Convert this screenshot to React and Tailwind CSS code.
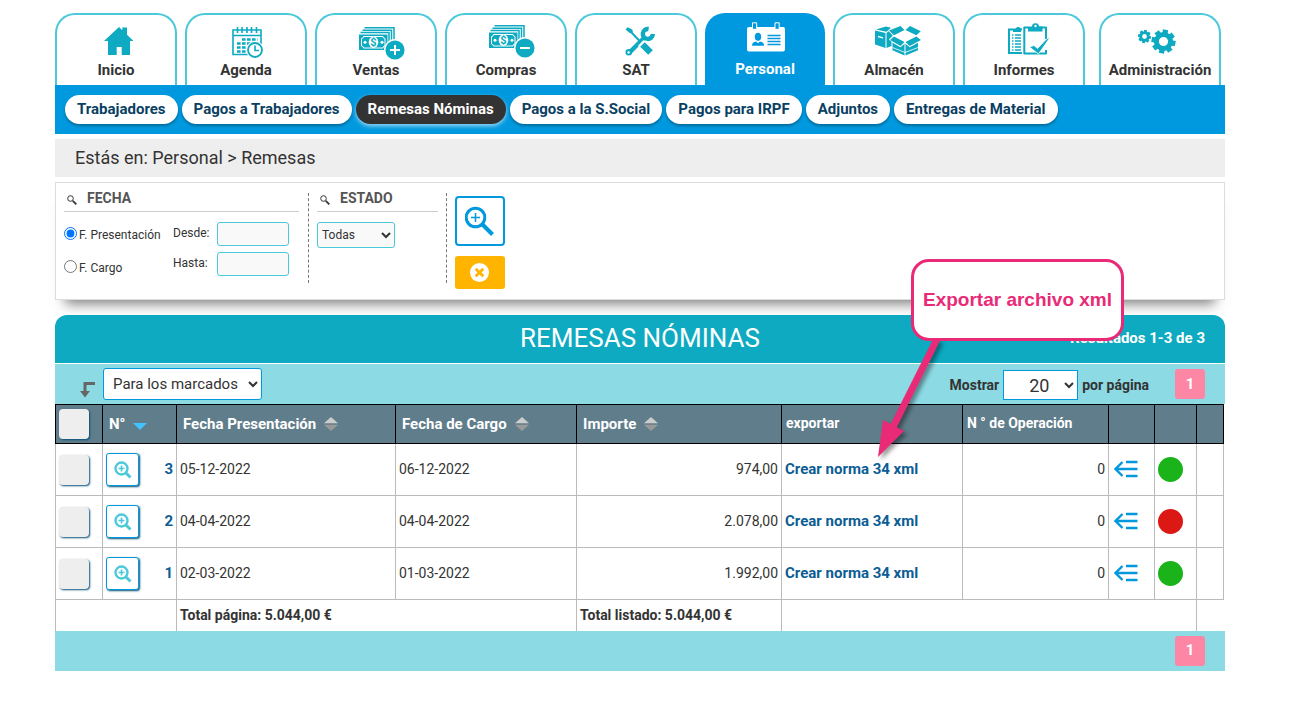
const TEAL = "#0daac1";

const HomeIcon = () => (
  <path
    fill={TEAL}
    d="M33 4l3.3 3.3V4.5H41v7.3l6.5 6.2H44v14h-8.3v-8h-5v8H22V18h-4z"
  />
);

const AgendaIcon = () => (
  <g fill="none" stroke={TEAL}>
    <path strokeWidth="1.6" d="M17 7h28v24.5H17zM17 12.5h28" />
    <path strokeWidth="1.6" d="M21.5 4v6M26 4v6M31 4v6M35.5 4v6M40.5 4v6" />
    <path
      strokeWidth="2.6"
      strokeDasharray="3.6 1.4"
      d="M26 16.5h15.5M21 20.5h20M21 24.5h15M21 28.5h10"
    />
    <circle cx="39" cy="27" r="9" fill="#fff" stroke="none" />
    <circle cx="39" cy="27" r="7" fill="#fff" strokeWidth="1.8" />
    <path strokeWidth="1.6" d="M39 22.5V27.5h4" />
  </g>
);

const MoneyIcon = ({ minus }) => (
  <g transform={minus ? "translate(0 -2)" : undefined}>
    <path
      fill="none"
      stroke={TEAL}
      strokeWidth="1.5"
      d="M18.5 4.8H48V20M16.5 7.2h29V20M14.500 9.6H43V20"
    />
    <path fill={TEAL} d="M13 11.5h28.5V27H13z" />
    <path
      fill="none"
      stroke="#fff"
      d="M17.5 13.5h19.5a2 2 0 0 0 2 2v7.5a2 2 0 0 0-2 2H17.5a2 2 0 0 0-2-2v-7.5a2 2 0 0 0 2-2z"
    />
    <ellipse cx="27.5" cy="19.2" rx="4.8" ry="5.8" fill="#fff" />
    <circle cx="19" cy="19.2" r="1.5" fill="#fff" />
    <circle cx="36" cy="19.2" r="1.5" fill="#fff" />
    <text
      x="27.5"
      y="23.3"
      textAnchor="middle"
      fill={TEAL}
      className="text-[11px] font-bold"
    >
      $
    </text>
    <circle cx="49" cy="27" r="11" fill="#fff" />
    <circle cx="49" cy="27" r="9.6" fill={TEAL} />
    <path
      stroke="#fff"
      strokeWidth="2"
      d={minus ? "M44 27h10" : "M44 27h10M49 22v10"}
    />
  </g>
);

const ToolsIcon = () => (
  <g fill="none" stroke={TEAL}>
    <path fill={TEAL} stroke="none" d="M19.5 6.500l2.300-2.300 4.700 2.600.3 3-3 .2z" />
    <path strokeWidth="2" d="M24 8l13 13.5" />
    <path strokeWidth="4.5" d="M24 29l13.500-13.500" />
    <path stroke="#fff" strokeWidth="8" d="M34.800 19.800l9 9" />
    <path strokeWidth="6.5" d="M36.500 21.500l8 8" />
    <circle cx="22.8" cy="29.2" r="3.3" fill={TEAL} stroke="none" />
    <circle cx="22.6" cy="29.4" r="1.2" fill="#fff" stroke="none" />
    <path strokeWidth="4.4" d="M42.600 6a5 5 0 1 0 4.200 5" />
  </g>
);

const CardIcon = () => (
  <g>
    <rect x="12" y="5" width="38" height="24.5" rx="2" fill="#fff" />
    <path
      fill="#0099df"
      stroke="#fff"
      d="M17.5.8h4.200v6.500h-4.200zM40 .8h4.200v6.500H40z"
    />
    <ellipse cx="23" cy="14.8" rx="3.2" ry="4" fill="#0099df" />
    <path
      fill="#0099df"
      d="M17 23.800c0-3 1.500-3.800 4-4.300l2 1.800 2-1.800c2.500.5 4 1.300 4 4.300z"
    />
    <path
      stroke="#0099df"
      strokeWidth="1.3"
      d="M32.500 13.500H45.500M32.500 16.500H45.500M32.500 19.500H45.500M32.500 22.500H45.500"
    />
  </g>
);

const BoxesIcon = () => (
  <g fill={TEAL}>
    <path d="M12 6.500L22 3.500l5 1.200-4.500 4zM11 7.500l10.500 2.500v15L11 21.500z" />
    <path d="M22.500 10l2.300-1.800 4 4.500-4 3.800 2.700 2.300v4.200l-5 2z" />
    <path stroke="#fff" strokeWidth="1.3" d="M14 13.500l5 1.300" />
    <path d="M30 12.200l10.500-5.200-4-4L25 7.500zM41.500 7l10.800 5.200 4.500-4L46 3z" />
    <path d="M30 13.500l10.500 5.500-4 4L26 17zM52.300 13.500L41.500 19l4.200 4L57 17z" />
    <path d="M28.500 19.800l8 4.500 4-3.500v11.700l-12-5.200zM54 19.800l-8.300 4.500-4.200-3.500v11.700l12.500-5.200z" />
    <path stroke="#fff" strokeWidth=".8" d="M28.500 24.500l12.500 5 13-5" fill="none" />
  </g>
);

const ReportsIcon = () => (
  <g fill="none" stroke={TEAL}>
    <path strokeWidth="2" d="M28 6.500H15V30h13" />
    <path fill={TEAL} stroke="none" d="M19 9V6h2.500a3 3 0 0 1 5.500-.5V9z" />
    <path
      strokeWidth="1.3"
      d="M18 12h1.500M21 12h6M18 15h1.500M21 15h6M18 18h1.500M21 18h6M18 21h1.500M21 21h6M18 24h1.500M21 24h6M18 27h1.500M21 27h6"
    />
    <path
      strokeWidth="2"
      strokeLinejoin="round"
      d="M52 16V4.500H30.300V30.500h21.700V27"
    />
    <path
      fill={TEAL}
      stroke="none"
      d="M34 8.500V4H38a3.500 3.500 0 0 1 7-.5h3.500v5z"
    />
    <circle cx="41.5" cy="3" r="1.2" fill="#fff" stroke="none" />
    <path
      fill={TEAL}
      stroke="#fff"
      strokeWidth=".8"
      d="M35.500 24l4.500-1.500 3.500 3 9-9.500 3.500-1.500-11.500 16.500z"
    />
  </g>
);

const Gear = ({ cx, cy, r, hole }) => (
  <g transform={`translate(${cx} ${cy})`} fill={TEAL}>
    <circle
      r={(r * 0.8 + hole) / 2}
      fill="none"
      stroke={TEAL}
      strokeWidth={r * 0.8 - hole}
    />
    {[0, 45, 90, 135, 180, 225, 270, 315].map((a) => (
      <rect
        key={a}
        x={-r * 0.22}
        y={-r}
        width={r * 0.44}
        height={r * 0.4}
        transform={`rotate(${a + 10})`}
      />
    ))}
  </g>
);

const GearsIcon = () => (
  <g>
    <Gear cx={14.5} cy={13.5} r={6.5} hole={2.4} />
    <Gear cx={33.5} cy={18.5} r={12} hole={4.6} />
  </g>
);

const TABS = [
  { label: "Inicio", icon: <HomeIcon /> },
  { label: "Agenda", icon: <AgendaIcon /> },
  { label: "Ventas", icon: <MoneyIcon /> },
  { label: "Compras", icon: <MoneyIcon minus /> },
  { label: "SAT", icon: <ToolsIcon /> },
  { label: "Personal", icon: <CardIcon />, active: true },
  { label: "Almacén", icon: <BoxesIcon /> },
  { label: "Informes", icon: <ReportsIcon /> },
  { label: "Administración", icon: <GearsIcon /> },
];

const SUBTABS = [
  "Trabajadores",
  "Pagos a Trabajadores",
  "Remesas Nóminas",
  "Pagos a la S.Social",
  "Pagos para IRPF",
  "Adjuntos",
  "Entregas de Material",
];

const ROWS = [
  { id: 3, date: "05-12-2022", charge: "06-12-2022", amount: "974,00", ok: true },
  { id: 2, date: "04-04-2022", charge: "04-04-2022", amount: "2.078,00", ok: false },
  { id: 1, date: "02-03-2022", charge: "01-03-2022", amount: "1.992,00", ok: true },
];

const Nav = () => (
  <header>
    <nav className="flex gap-2">
      {TABS.map(({ label, icon, active }) => (
        <a
          key={label}
          href="#"
          className={
            active
              ? "flex h-[72px] w-[120px] flex-col items-center rounded-t-[20px] bg-[#0099df] pt-[9px] text-white"
              : "flex h-[72px] w-[122px] flex-col items-center rounded-t-[20px] border-2 border-b-0 border-[#4bc9da] pt-2 text-[#333] last:ml-1.5"
          }
        >
          <svg width="60" height="36" viewBox="0 0 60 36" className="overflow-visible" aria-hidden="true">
            {icon}
          </svg>
          <span className="text-[15px] leading-[22px] font-bold">{label}</span>
        </a>
      ))}
    </nav>
    <nav className="flex gap-1 bg-[#0099df] p-2.5">
      {SUBTABS.map((label) => (
        <a
          key={label}
          href="#"
          className={
            label === "Remesas Nóminas"
              ? "rounded-full bg-[#333] px-3 text-[15px] leading-[29px] font-bold text-white shadow-[0_2px_4px_rgba(255,255,255,0.6)]"
              : "rounded-full bg-white px-3 text-[15px] leading-[29px] font-bold text-[#0a3f63] shadow-[0_2px_3px_rgba(0,0,0,0.3)]"
          }
        >
          {label}
        </a>
      ))}
    </nav>
  </header>
);

const FilterTitle = ({ children }) => (
  <h2 className="flex h-[19px] gap-2.5 border-b border-[#ccc] pl-[3px] text-[14px] leading-[10px] font-bold text-[#555]">
    <svg width="10" height="10" viewBox="0 0 10 10" className="mt-[2px]" aria-hidden="true">
      <circle cx="3.5" cy="3.5" r="2.8" fill="none" stroke="#333" />
      <path stroke="#333" strokeWidth="1.8" d="M5.800 5.800l3.500 3.500" />
    </svg>
    {children}
  </h2>
);

const Filters = () => (
  <form className="mt-[5px] flex min-h-[118px] border border-[#ddd] bg-white pt-2.5 pl-2 text-[12px] text-[#333] shadow-[0_14px_12px_-10px_rgba(0,0,0,0.5)]">
    <div className="h-[90px] w-[245px] border-r border-dashed border-[#777] pr-[9px]">
      <FilterTitle>FECHA</FilterTitle>
      <div className="mt-2.5 flex">
        <div className="flex w-[109px] flex-col gap-[13px] pt-[3px]">
          <label className="flex h-5 items-center gap-[2px]">
            <input type="radio" name="fecha" defaultChecked className="m-0 mb-1 size-[13px]" />
            F. Presentación
          </label>
          <label className="flex h-5 items-center gap-[2px]">
            <input type="radio" name="fecha" className="m-0 mb-1 size-[13px]" />
            F. Cargo
          </label>
        </div>
        <div className="flex flex-col gap-1.5">
          <label className="flex">
            <span className="w-11 leading-[22px]">Desde:</span>
            <input type="text" className="h-6 w-[72px] rounded-[3px] border border-[#4bc9da] bg-[#f9f9f9] px-1" />
          </label>
          <label className="flex">
            <span className="w-11 leading-[22px]">Hasta:</span>
            <input type="text" className="h-6 w-[72px] rounded-[3px] border border-[#4bc9da] bg-[#f9f9f9] px-1" />
          </label>
        </div>
      </div>
    </div>
    <div className="h-[90px] w-[138px] border-r border-dashed border-[#777] px-2">
      <FilterTitle>ESTADO</FilterTitle>
      <select
        aria-label="Estado"
        className="mt-2.5 h-[26px] w-[78px] rounded-[3px] border border-[#4bc9da] bg-[#f9f9f9]"
      >
        <option>Todas</option>
      </select>
    </div>
    <div className="flex flex-col gap-2.5 pt-[3px] pl-2">
      <button
        type="button"
        aria-label="Buscar"
        className="flex size-[50px] items-center justify-center rounded-[4px] border-2 border-[#0099df]"
      >
        <svg width="30" height="30" viewBox="0 0 30 30" fill="none" stroke="#0099df">
          <circle cx="10.5" cy="11.5" r="9.3" strokeWidth="3" />
          <path strokeWidth="1.5" d="M6 11.500h9M10.500 7v9" />
          <path strokeWidth="4" d="M17 18l10.500 10.500" />
        </svg>
      </button>
      <button
        type="button"
        aria-label="Limpiar"
        className="flex h-[33px] w-[50px] items-center justify-center rounded-[3px] bg-[#ffb400]"
      >
        <svg width="20" height="20" viewBox="0 0 20 20">
          <circle cx="9.5" cy="9.5" r="9.5" fill="#fff" />
          <path stroke="#ffb400" strokeWidth="2.8" d="M5.700 5.700l7.600 7.600M13.300 5.700l-7.600 7.600" />
        </svg>
      </button>
    </div>
  </form>
);

const SortIcon = () => (
  <svg width="14" height="14" viewBox="0 0 14 14" aria-hidden="true">
    <path fill="#ccc" d="M7 0l7 6.300H0z" />
    <path fill="#999" d="M7 14L0 7.700h14z" />
  </svg>
);

const Check = ({ label }) => (
  <input
    type="checkbox"
    aria-label={label}
    className="block size-[30px] appearance-none rounded-[4px] bg-[#eee] shadow-[1px_1px_2px_#045078]"
  />
);

const PageButton = () => (
  <button
    type="button"
    className="size-[30px] rounded-[3px] bg-[#fc86a3] text-[15px] font-bold text-white"
  >
    1
  </button>
);

const Results = () => (
  <table className="w-full table-fixed border-collapse text-left text-[14px] leading-[20px] text-[#333]">
    <colgroup>
      <col className="w-[47px]" />
      <col className="w-[74px]" />
      <col />
      <col className="w-[181px]" />
      <col className="w-[205px]" />
      <col className="w-[181px]" />
      <col className="w-[146px]" />
      <col className="w-[46px]" />
      <col className="w-[42px]" />
      <col className="w-[27px]" />
    </colgroup>
    <thead>
      <tr className="h-[39px] bg-[#607d8b] text-white [&>th]:border [&>th]:border-black">
        <th className="pl-[3px]">
          <Check label="Marcar todos" />
        </th>
        <th className="pl-1.5">
          <span className="flex items-center gap-2 text-[15px]">
            N°
            <svg width="14" height="7" viewBox="0 0 14 7" className="mt-1" aria-hidden="true">
              <path fill="#40c4ff" d="M0 0h14L7 7z" />
            </svg>
          </span>
        </th>
        <th className="pl-1.5">
          <span className="flex items-center gap-2 text-[15px]">
            Fecha Presentación <SortIcon />
          </span>
        </th>
        <th className="pl-1.5">
          <span className="flex items-center gap-2 text-[15px]">
            Fecha de Cargo <SortIcon />
          </span>
        </th>
        <th className="pl-1.5">
          <span className="flex items-center gap-2 text-[15px]">
            Importe <SortIcon />
          </span>
        </th>
        <th className="pb-[3px] pl-1">exportar</th>
        <th className="pb-[3px] pl-1">N ° de Operación</th>
        <th></th>
        <th></th>
        <th></th>
      </tr>
    </thead>
    <tbody>
      {ROWS.map((row) => (
        <tr key={row.id} className="h-[52px] [&>td]:border [&>td]:border-[#bbb] [&>td]:px-[3px]">
          <td>
            <Check label={`Marcar ${row.id}`} />
          </td>
          <td>
            <div className="flex items-center justify-between">
              <button
                type="button"
                aria-label={`Ver ${row.id}`}
                className="flex size-[33px] items-center justify-center rounded-[3px] border border-[#0099df] bg-white shadow-[1px_1px_2px_#045078]"
              >
                <svg width="18" height="18" viewBox="0 0 18 18" fill="none" stroke="#4bc9da">
                  <circle cx="7.5" cy="7.5" r="6" strokeWidth="2.4" />
                  <path strokeWidth="1.6" d="M4.500 7.500h6M7.500 4.500v6" />
                  <path strokeWidth="3" d="M11.500 11.500l5 5" />
                </svg>
              </button>
              <a href="#" className="pb-[2px] text-[15px] font-bold text-[#0b5d94]">
                {row.id}
              </a>
            </div>
          </td>
          <td className="pb-[2px]">{row.date}</td>
          <td className="pb-[2px]">{row.charge}</td>
          <td className="pb-[2px] text-right">{row.amount}</td>
          <td className="pb-[2px]">
            <a href="#" className="text-[15px] font-bold text-[#0b5d94]">
              Crear norma 34 xml
            </a>
          </td>
          <td className="pb-[2px] text-right">0</td>
          <td className="pb-[2px]">
            <button type="button" aria-label="Detalle" className="ml-[2px] block">
              <svg width="24" height="18" viewBox="0 0 24 18" fill="none" stroke="#0099df" strokeWidth="2.4">
                <path d="M8.500 2L1.500 9l7 7M1.500 9H23.500M12 2H23.500M12 16H23.500" />
              </svg>
            </button>
          </td>
          <td>
            <span
              className={
                row.ok
                  ? "block size-[25px] rounded-full bg-[#1ab31a]"
                  : "block size-[25px] rounded-full bg-[#dc1814]"
              }
            />
          </td>
          <td></td>
        </tr>
      ))}
      <tr className="h-[31px] font-bold [&>td]:border-x [&>td]:border-[#bbb] [&>td]:px-[3px]">
        <td colSpan={2}></td>
        <td colSpan={2}>Total página: 5.044,00 €</td>
        <td>Total listado: 5.044,00 €</td>
        <td colSpan={4}></td>
        <td className="border-r-0!"></td>
      </tr>
    </tbody>
  </table>
);

const Callout = () => (
  <div className="absolute -top-14 left-[822px]">
    <svg
      width="213"
      height="204"
      viewBox="0 0 213 204"
      className="block overflow-visible drop-shadow-[3px_3px_2px_rgba(0,0,0,0.4)]"
      aria-hidden="true"
    >
      <path stroke="#e92a76" strokeWidth="7" d="M60 80L15 170" />
      <path fill="#e92a76" d="M1 198l5-37 21 11z" />
    </svg>
    <div className="absolute top-0 left-[34px] flex h-[82px] w-[213px] items-center justify-center rounded-[18px] border-3 border-[#e92a76] bg-white font-['Liberation_Sans',Arial,sans-serif] text-[19px] font-bold whitespace-nowrap text-[#e92a76]">
      Exportar archivo xml
    </div>
  </div>
);

const App = () => {
  return (
    <main className="min-w-[1224px] bg-white pt-[13px] pr-[83px] pb-8 pl-[55px] font-[Roboto,sans-serif]">
      <Nav />
      <p className="mt-[5px] bg-[#eee] pl-5 text-[18px] leading-[38px] text-[#333]">
        Estás en: Personal &gt; Remesas
      </p>
      <Filters />

      <section className="relative mt-[15px]">
        <div className="grid h-12 grid-cols-[1fr_auto_1fr] items-center rounded-t-[12px] bg-[#0daac1] pb-[2px] text-white">
          <span />
          <h1 className="text-[26px] leading-[30px]">REMESAS NÓMINAS</h1>
          <span className="pr-5 text-right text-[15px] font-bold">Resultados 1-3 de 3</span>
        </div>
        <div className="mt-px flex h-10 items-center bg-[#8cdae4] pr-5 text-[#333]">
          <svg width="16" height="17" viewBox="0 0 16 17" className="mt-2.5 ml-6" aria-hidden="true">
            <path fill="none" stroke="#666" strokeWidth="3" d="M16 2.500H6V11" />
            <path fill="#666" d="M1 10h10l-5 6.500z" />
          </svg>
          <select
            aria-label="Acción para los marcados"
            className="ml-2 h-8 w-[159px] rounded-[3px] border border-[#0099df] bg-white pl-[5px] text-[15px]"
          >
            <option>Para los marcados</option>
          </select>
          <label className="ml-auto flex items-center gap-1 pt-[2px] text-[14px] font-bold">
            Mostrar
            <select className="h-[30px] w-[75px] border border-[#0099df] bg-white pl-[21px] text-[18px] font-normal">
              <option>20</option>
            </select>
            por página
          </label>
          <div className="ml-[26px]">
            <PageButton />
          </div>
        </div>
        <div className="pr-px">
          <Results />
        </div>
        <div className="flex h-10 items-center justify-end bg-[#8cdae4] pr-5">
          <PageButton />
        </div>
        <Callout />
      </section>
    </main>
  );
};

export default App;
